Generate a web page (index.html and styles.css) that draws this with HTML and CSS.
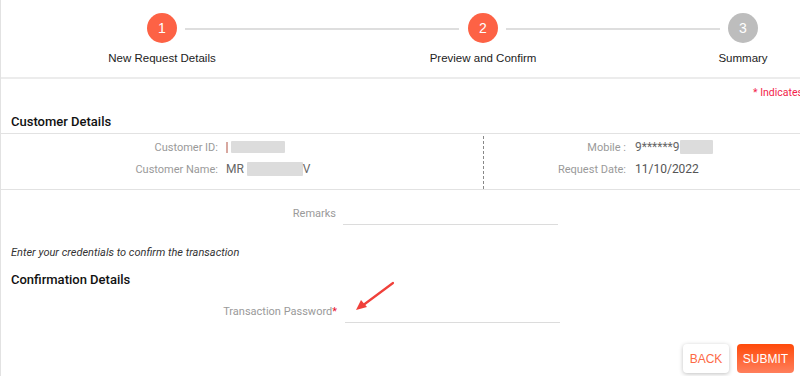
FILE: index.html
```html
<!DOCTYPE html>
<html>
<head>
<meta charset="utf-8">
<link rel="stylesheet" href="styles.css">
</head>
<body>
<div class="page">
  <div class="stepper">
    <div class="step">
      <div class="circle active">1</div>
      <div class="step-label">New Request Details</div>
    </div>
    <div class="line l1"></div>
    <div class="step">
      <div class="circle active">2</div>
      <div class="step-label">Preview and Confirm</div>
    </div>
    <div class="line l2"></div>
    <div class="step">
      <div class="circle">3</div>
      <div class="step-label">Summary</div>
    </div>
  </div>
  <div class="note">* Indicates mandatory fields</div>
  <div class="section-title">Customer Details</div>
  <div class="details">
    <div class="col left">
      <div class="row"><span class="lbl">Customer ID:</span><span class="val"><span class="redact-i"></span><span class="blur b1"></span></span></div>
      <div class="row"><span class="lbl">Customer Name:</span><span class="val">MR <span class="blur b2"></span>V</span></div>
    </div>
    <div class="col right">
      <div class="row"><span class="lbl">Mobile :</span><span class="val">9******9<span class="blur b3"></span></span></div>
      <div class="row"><span class="lbl">Request Date:</span><span class="val date">11/10/2022</span></div>
    </div>
  </div>
  <div class="field remarks">
    <span class="flabel">Remarks</span>
    <span class="finput"></span>
  </div>
  <div class="hint">Enter your credentials to confirm the transaction</div>
  <div class="section-title conf">Confirmation Details</div>
  <div class="field pwd">
    <span class="flabel">Transaction Password<span class="req">*</span></span>
    <span class="finput"></span>
  </div>
  <div class="actions">
    <button class="btn back">BACK</button>
    <button class="btn submit">SUBMIT</button>
  </div>
  <svg class="arrow" width="50" height="40" viewBox="0 0 50 40">
    <line x1="41" y1="3" x2="10" y2="26" stroke="#f0403a" stroke-width="2.2" stroke-linecap="round"/>
    <polygon points="4,30 9,20 15,27" fill="#f0403a"/>
  </svg>
</div>
</body>
</html>
```

FILE: styles.css
```css
* { box-sizing: border-box; }
html, body { margin: 0; padding: 0; background: #fff; overflow: hidden; }
body { width: 800px; height: 376px; font-family: Roboto, "Liberation Sans", Arial, sans-serif; }
.page {
  position: relative;
  height: 376px;
  border-left: 1px solid #e2e2e2;
}
.stepper {
  display: flex;
  align-items: flex-start;
  height: 79px;
  padding: 13px 0 0 146px;
  border-bottom: 2px solid #ececec;
}
.step {
  width: 30px;
  display: flex;
  flex-direction: column;
  align-items: center;
}
.circle {
  width: 30px;
  height: 30px;
  border-radius: 50%;
  background: #bdbdbd;
  color: #fff;
  font-family: "Liberation Sans", Arial, sans-serif;
  font-size: 14px;
  line-height: 30px;
  text-align: center;
}
.circle.active { background: #fd6245; }
.step-label {
  white-space: nowrap;
  margin-top: 9px;
  font-family: "Liberation Sans", Arial, sans-serif;
  font-size: 11.5px;
  color: #222;
}
.line {
  height: 2px;
  background: #dedede;
  margin-top: 15px;
}
.l1 { width: 274px; margin-left: 8px; margin-right: 9px; }
.l2 { width: 214px; margin-left: 8px; margin-right: 8px; }
.note {
  margin: 7px 0 0 752px;
  white-space: nowrap;
  font-size: 10.5px;
  color: #f2234a;
  height: 14px;
}
.section-title {
  margin: 13px 0 0 10px;
  font-size: 13px;
  font-weight: 500;
  color: #111;
  height: 18px;
  line-height: 18px;
}
.details {
  display: grid;
  grid-template-columns: 482px 1fr;
  margin-top: 2px;
  border-top: 1px solid #e2e2e2;
  border-bottom: 1px solid #e2e2e2;
  height: 57px;
  padding-top: 2px;
}
.col { display: flex; flex-direction: column; }
.col.right { border-left: 1px dashed #888; }
.row {
  display: flex;
  align-items: center;
  height: 22px;
  font-size: 11px;
}
.left .lbl { width: 217px; }
.right .lbl { width: 142px; }
.lbl { text-align: right; color: #9a9a9a; }
.val { margin-left: 9px; color: #666; display: flex; align-items: center; white-space: pre; font-size: 12px; }
.left .val { margin-left: 8px; }
.date { color: #555; }
.redact-i { width: 2px; height: 11px; background: #d8a8a0; margin-right: 3px; }
.blur { display: inline-block; height: 12px; background: #dcdcdc; border-radius: 1px; }
.b1 { width: 54px; }
.b2 { width: 56px; height: 14px; }
.b3 { width: 33px; height: 14px; }
.field {
  display: flex;
  align-items: flex-end;
  font-size: 11px;
  height: 24px;
}
.flabel { color: #9a9a9a; text-align: right; padding-bottom: 5px; }
.finput { height: 1px; background: #dcdcdc; }
.remarks { margin-top: 11px; }
.remarks .flabel { width: 335px; }
.remarks .finput { width: 215px; margin-left: 7px; }
.hint {
  margin: 21px 0 0 10px;
  font-size: 11px;
  line-height: 13px;
  font-style: italic;
  color: #333;
}
.section-title.conf { margin-top: 12px; }
.pwd { margin-top: 10px; }
.pwd .flabel { width: 336px; }
.pwd .finput { width: 215px; margin-left: 8px; }
.req { color: #e8112d; }
.actions {
  display: flex;
  justify-content: flex-end;
  gap: 8px;
  margin-top: 21px;
  padding-right: 6px;
}
.btn {
  height: 29px;
  border: none;
  border-radius: 4px;
  font-family: "Liberation Sans", Arial, sans-serif;
  font-size: 12px;
  padding: 0;
}
.back {
  width: 46px;
  background: #fff;
  color: #fd6a45;
  box-shadow: 0 1px 4px rgba(0,0,0,0.25);
}
.submit {
  width: 57px;
  color: #fff;
  background: linear-gradient(#ff4a0a, #ff7f5c);
}
.arrow {
  position: absolute;
  left: 351px;
  top: 280px;
}
```
